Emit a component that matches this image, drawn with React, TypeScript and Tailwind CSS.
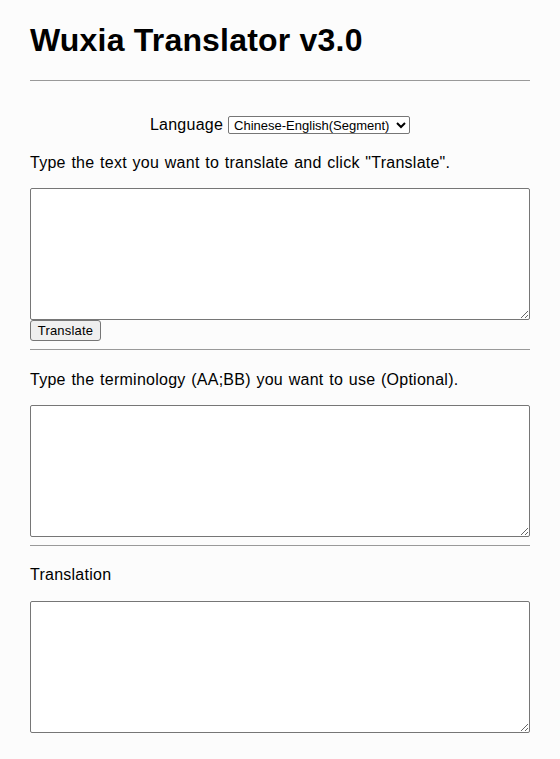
import { useState } from 'react'

const font = { fontFamily: '"Liberation Sans", Arial, sans-serif' }
const label = 'text-[16px] leading-[18px] tracking-[0.25px] [word-spacing:1px]'

function Box({ value, onChange }: { value: string; onChange: (v: string) => void }) {
  return (
    <textarea
      value={value}
      onChange={e => onChange(e.target.value)}
      className="block w-[500px] h-[132px] bg-white border border-[#767676] rounded-[2px] p-[2px] text-[13px]"
    />
  )
}

export default function App() {
  const [src, setSrc] = useState('')
  const [terms, setTerms] = useState('')
  const [out, setOut] = useState('')
  const [lang, setLang] = useState('seg')

  return (
    <div className="min-h-[759px] bg-[#fcfcfc] text-black px-[30px] pt-[22px]" style={font}>
      <h1 className="text-[32px] leading-[37px] font-bold tracking-[0.2px]">Wuxia Translator v3.0</h1>
      <div className="mt-[21px] border-t border-[#999] w-[500px]" />

      <div className={`mt-[35px] flex items-center justify-center w-[500px] gap-[5px] ${label}`}>
        <span>Language</span>
        <select
          value={lang}
          onChange={e => setLang(e.target.value)}
          className="w-[182px] h-[18px] text-[13px] tracking-normal [word-spacing:0] bg-white border border-[#767676] rounded-[2px] pl-[1px]"
          style={{ appearance: 'auto' }}
        >
          <option value="seg">Chinese-English(Segment)</option>
          <option value="full">Chinese-English(Full)</option>
        </select>
      </div>

      <p className={`mt-[20px] ${label}`}>Type the text you want to translate and click "Translate".</p>
      <div className="mt-[16px]">
        <Box value={src} onChange={setSrc} />
      </div>
      <button className="block w-[71px] h-[21px] text-[13px] tracking-[0.2px] bg-[#efefef] border border-[#767676] rounded-[3px]">
        Translate
      </button>
      <div className="mt-[8px] border-t border-[#999] w-[500px]" />

      <p className={`mt-[21px] ${label}`}>Type the terminology (AA;BB) you want to use (Optional).</p>
      <div className="mt-[16px]">
        <Box value={terms} onChange={setTerms} />
      </div>
      <div className="mt-[8px] border-t border-[#999] w-[500px]" />

      <p className={`mt-[20px] ${label}`}>Translation</p>
      <div className="mt-[17px]">
        <Box value={out} onChange={setOut} />
      </div>
    </div>
  )
}
